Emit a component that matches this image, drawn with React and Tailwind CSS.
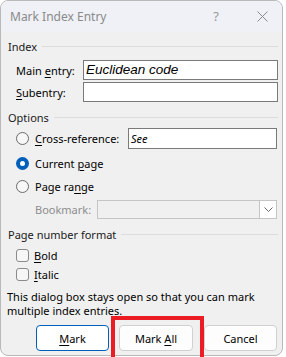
import React from "react";

const font = { fontFamily: '"Noto Sans", "Open Sans", sans-serif' };

function U({ children }) {
  return <span className="underline underline-offset-[2px] decoration-[1px]">{children}</span>;
}

function Radio({ checked }) {
  return checked ? (
    <span className="flex h-[13px] w-[13px] shrink-0 items-center justify-center rounded-full bg-[#005fb8]">
      <span className="h-[5px] w-[5px] rounded-full bg-white" />
    </span>
  ) : (
    <span className="h-[13px] w-[13px] shrink-0 rounded-full border border-[#6a6a6a] bg-[#f7f7f7]" />
  );
}

function Check() {
  return <span className="h-[13px] w-[13px] shrink-0 rounded-[3px] border border-[#8a8a8a] bg-[#f6f6f6]" />;
}

function GroupTitle({ children, className }) {
  return (
    <div className={"flex h-[14px] items-center pl-[7px] pr-[4px] " + (className || "")}>
      <span className="text-[#1a1a1a]">{children}</span>
      <span className="ml-[5px] h-px flex-1 bg-[#dcdcdc]" />
    </div>
  );
}

export default function App() {
  return (
    <div className="relative h-[357px] w-[286px] overflow-hidden bg-white" style={font}>
      <div className="flex h-[356px] w-[283px] flex-col overflow-hidden rounded-[8px] border border-[#b9b9b9] bg-[#f0f0f0] text-[11px] leading-none text-black">
        {/* title bar */}
        <div className="flex h-[31px] shrink-0 items-center bg-[#eff1f6] pl-[9px]">
          <span className="text-[12px] text-[#8a8a8a]">Mark Index Entry</span>
          <span className="ml-auto mr-[38px] text-[13px] text-[#9a9a9a]">?</span>
          <svg className="mr-[14px]" width="11" height="11" viewBox="0 0 11 11">
            <path d="M0.5 0.5 L10.5 10.5 M10.5 0.5 L0.5 10.5" stroke="#8a8a8a" strokeWidth="1" />
          </svg>
        </div>

        {/* Index */}
        <GroupTitle className="mt-[7px]">Index</GroupTitle>
        <div className="mt-[7px] flex h-[20px] items-center pr-[4px]">
          <span className="w-[82px] shrink-0 pl-[15px]">
            Main <U>e</U>ntry:
          </span>
          <div className="flex h-[20px] flex-1 items-center border border-[#7a7a7a] bg-white pl-[2px]">
            <span className="text-[13.5px] italic" style={{ fontFamily: '"Liberation Sans", Arial, sans-serif' }}>
              Euclidean code
            </span>
          </div>
        </div>
        <div className="mt-[2px] flex h-[20px] items-center pr-[4px]">
          <span className="w-[82px] shrink-0 pl-[15px]">
            <U>S</U>ubentry:
          </span>
          <div className="h-[20px] flex-1 border border-[#7a7a7a] bg-white" />
        </div>

        {/* Options */}
        <GroupTitle className="mt-[8px]">Options</GroupTitle>
        <div className="mt-[4px] flex h-[21px] items-center pl-[15px] pr-[5px]">
          <Radio />
          <span className="ml-[6px] w-[93px] shrink-0">
            <U>C</U>ross-reference:
          </span>
          <div className="flex h-[21px] flex-1 items-center border border-[#7a7a7a] bg-white pl-[2px]">
            <span className="italic">See</span>
          </div>
        </div>
        <div className="mt-[4px] flex h-[20px] items-center pl-[15px]">
          <Radio checked />
          <span className="ml-[6px]">
            Current <U>p</U>age
          </span>
        </div>
        <div className="mt-[3px] flex h-[20px] items-center pl-[15px]">
          <Radio />
          <span className="ml-[6px]">
            Page ra<U>n</U>ge
          </span>
        </div>
        <div className="mt-[3px] flex h-[20px] items-center pr-[5px]">
          <span className="w-[96px] shrink-0 pl-[34px] text-[#8d8d8d]">Bookmark:</span>
          <div className="flex h-[19px] flex-1 items-stretch border border-[#c5c5c5] bg-[#f0f0f0]">
            <div className="flex-1" />
            <div className="flex w-[17px] items-center justify-center border-l border-[#c5c5c5] bg-white">
              <svg width="9" height="5" viewBox="0 0 9 5">
                <path d="M0.5 0.5 L4.5 4.5 L8.5 0.5" stroke="#6a6a6a" strokeWidth="1" fill="none" />
              </svg>
            </div>
          </div>
        </div>

        {/* Page number format */}
        <GroupTitle className="mt-[8px]">Page number format</GroupTitle>
        <div className="mt-[5px] flex h-[18px] items-center pl-[15px]">
          <Check />
          <span className="ml-[5px]">
            <U>B</U>old
          </span>
        </div>
        <div className="mt-[1px] flex h-[18px] items-center pl-[15px]">
          <Check />
          <span className="ml-[5px]">
            <U>I</U>talic
          </span>
        </div>

        <p className="mt-[7px] pl-[6px] leading-[14px]">
          This dialog box stays open so that you can mark
          <br />
          multiple index entries.
        </p>

        <div className="mt-[7px] flex h-[26px] pl-[35px]">
          <div className="flex w-[73px] items-center justify-center rounded-[4px] border border-[#005fb8] bg-white">
            <span>
              <U>M</U>ark
            </span>
          </div>
          <div className="ml-[10px] flex w-[74px] items-center justify-center rounded-[4px] border border-[#d0d0d0] bg-[#fdfdfd]">
            <span>
              Mark <U>A</U>ll
            </span>
          </div>
          <div className="ml-[11px] flex w-[73px] items-center justify-center rounded-[4px] border border-[#d0d0d0] bg-[#fdfdfd]">
            <span>Cancel</span>
          </div>
        </div>
      </div>

      {/* red highlight */}
      <div className="absolute left-[111px] top-[316px] h-[48px] w-[93px] border-[4px] border-[#ec1c24]" />
    </div>
  );
}
